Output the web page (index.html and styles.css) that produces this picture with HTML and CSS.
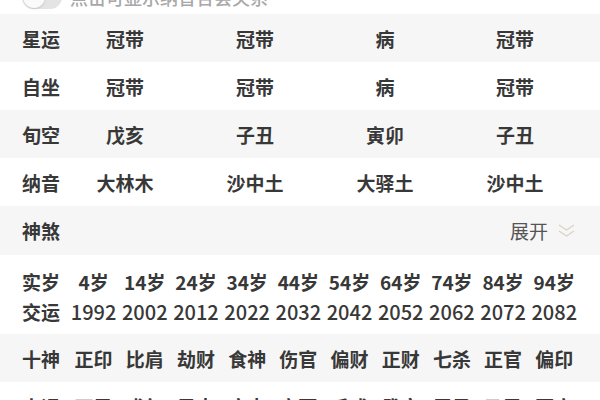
FILE: index.html
```html
<!DOCTYPE html>
<html lang="zh-CN">
<head>
<meta charset="utf-8">
<link rel="stylesheet" href="styles.css">
</head>
<body>
<div class="page">
  <div class="top-strip">
    <div class="top-inner">
      <span class="switch"><span class="knob"></span></span>
      <span class="hint">点击可显示纳音合会关系</span>
    </div>
  </div>

  <div class="row grey">
    <div class="label">星运</div>
    <div class="cols4"><span>冠带</span><span>冠带</span><span>病</span><span>冠带</span></div>
  </div>
  <div class="row">
    <div class="label">自坐</div>
    <div class="cols4"><span>冠带</span><span>冠带</span><span>病</span><span>冠带</span></div>
  </div>
  <div class="row grey">
    <div class="label">旬空</div>
    <div class="cols4"><span>戊亥</span><span>子丑</span><span>寅卯</span><span>子丑</span></div>
  </div>
  <div class="row">
    <div class="label">纳音</div>
    <div class="cols4"><span>大林木</span><span>沙中土</span><span>大驿土</span><span>沙中土</span></div>
  </div>
  <div class="row grey shensha">
    <div class="label">神煞</div>
    <div class="expand">
      <span>展开</span>
      <svg class="chev" width="17" height="13" viewBox="0 0 17 13"><polyline points="1,1 8.5,6 16,1" /><polyline points="1,7 8.5,12 16,7" /></svg>
    </div>
  </div>

  <div class="block">
    <div class="line">
      <div class="label">实岁</div>
      <div class="cols10"><span>4岁</span><span>14岁</span><span>24岁</span><span>34岁</span><span>44岁</span><span>54岁</span><span>64岁</span><span>74岁</span><span>84岁</span><span>94岁</span></div>
    </div>
    <div class="line">
      <div class="label">交运</div>
      <div class="cols10 years"><span>1992</span><span>2002</span><span>2012</span><span>2022</span><span>2032</span><span>2042</span><span>2052</span><span>2062</span><span>2072</span><span>2082</span></div>
    </div>
  </div>

  <div class="row grey">
    <div class="label">十神</div>
    <div class="cols10"><span>正印</span><span>比肩</span><span>劫财</span><span>食神</span><span>伤官</span><span>偏财</span><span>正财</span><span>七杀</span><span>正官</span><span>偏印</span></div>
  </div>
  <div class="row">
    <div class="label">大运</div>
    <div class="cols10"><span>丁巳</span><span>戊午</span><span>己未</span><span>庚申</span><span>辛酉</span><span>壬戌</span><span>癸亥</span><span>甲子</span><span>乙丑</span><span>丙寅</span></div>
  </div>
</div>
</body>
</html>
```

FILE: styles.css
```css
* { box-sizing: border-box; }
html, body { margin: 0; padding: 0; background: #fff; }
body {
  font-family: "Noto Sans CJK SC", "Noto Sans", sans-serif;
  font-size: 19px;
  color: #383838;
  width: 600px;
  height: 400px;
  overflow: hidden;
}
.page { width: 600px; }

.top-strip {
  height: 14px;
  overflow: hidden;
  background: #fff;
}
.top-inner {
  display: flex;
  align-items: center;
  gap: 8px;
  height: 34px;
  margin-top: -20px;
  padding-left: 22px;
}
.switch {
  position: relative;
  width: 40px;
  height: 24px;
  border-radius: 12px;
  background: #e4e4e4;
  flex: none;
}
.knob {
  position: absolute;
  left: 1px;
  top: 1px;
  width: 22px;
  height: 22px;
  border-radius: 50%;
  background: #fafafa;
  box-shadow: 0 1px 2px rgba(0,0,0,0.15);
}
.hint {
  font-size: 18px;
  color: #a8a8a8;
  font-weight: 500;
}

.row {
  display: flex;
  align-items: center;
  height: 48px;
  padding-left: 22px;
  background: #fff;
}
.row.grey { background: #f6f6f6; }
.label {
  width: 38px;
  flex: none;
  font-weight: 700;
  white-space: nowrap;
}
.cols4 {
  display: grid;
  grid-template-columns: repeat(4, 130px);
  font-weight: 700;
}
.cols4 span, .cols10 span { text-align: center; white-space: nowrap; }
.cols10 {
  display: grid;
  grid-template-columns: repeat(10, 51.2px);
  margin-left: 8px;
  font-weight: 700;
}
.years { font-weight: 500; font-size: 20px; }

.shensha { height: 49px; justify-content: space-between; padding-right: 25px; }
.expand {
  display: flex;
  align-items: center;
  gap: 10px;
  color: #555;
}
.chev { fill: none; stroke: #d8d3c3; stroke-width: 1.3; }

.block {
  padding: 11px 0 8px 22px;
  background: #fff;
}
.line {
  display: flex;
  align-items: center;
  height: 30px;
}
```
